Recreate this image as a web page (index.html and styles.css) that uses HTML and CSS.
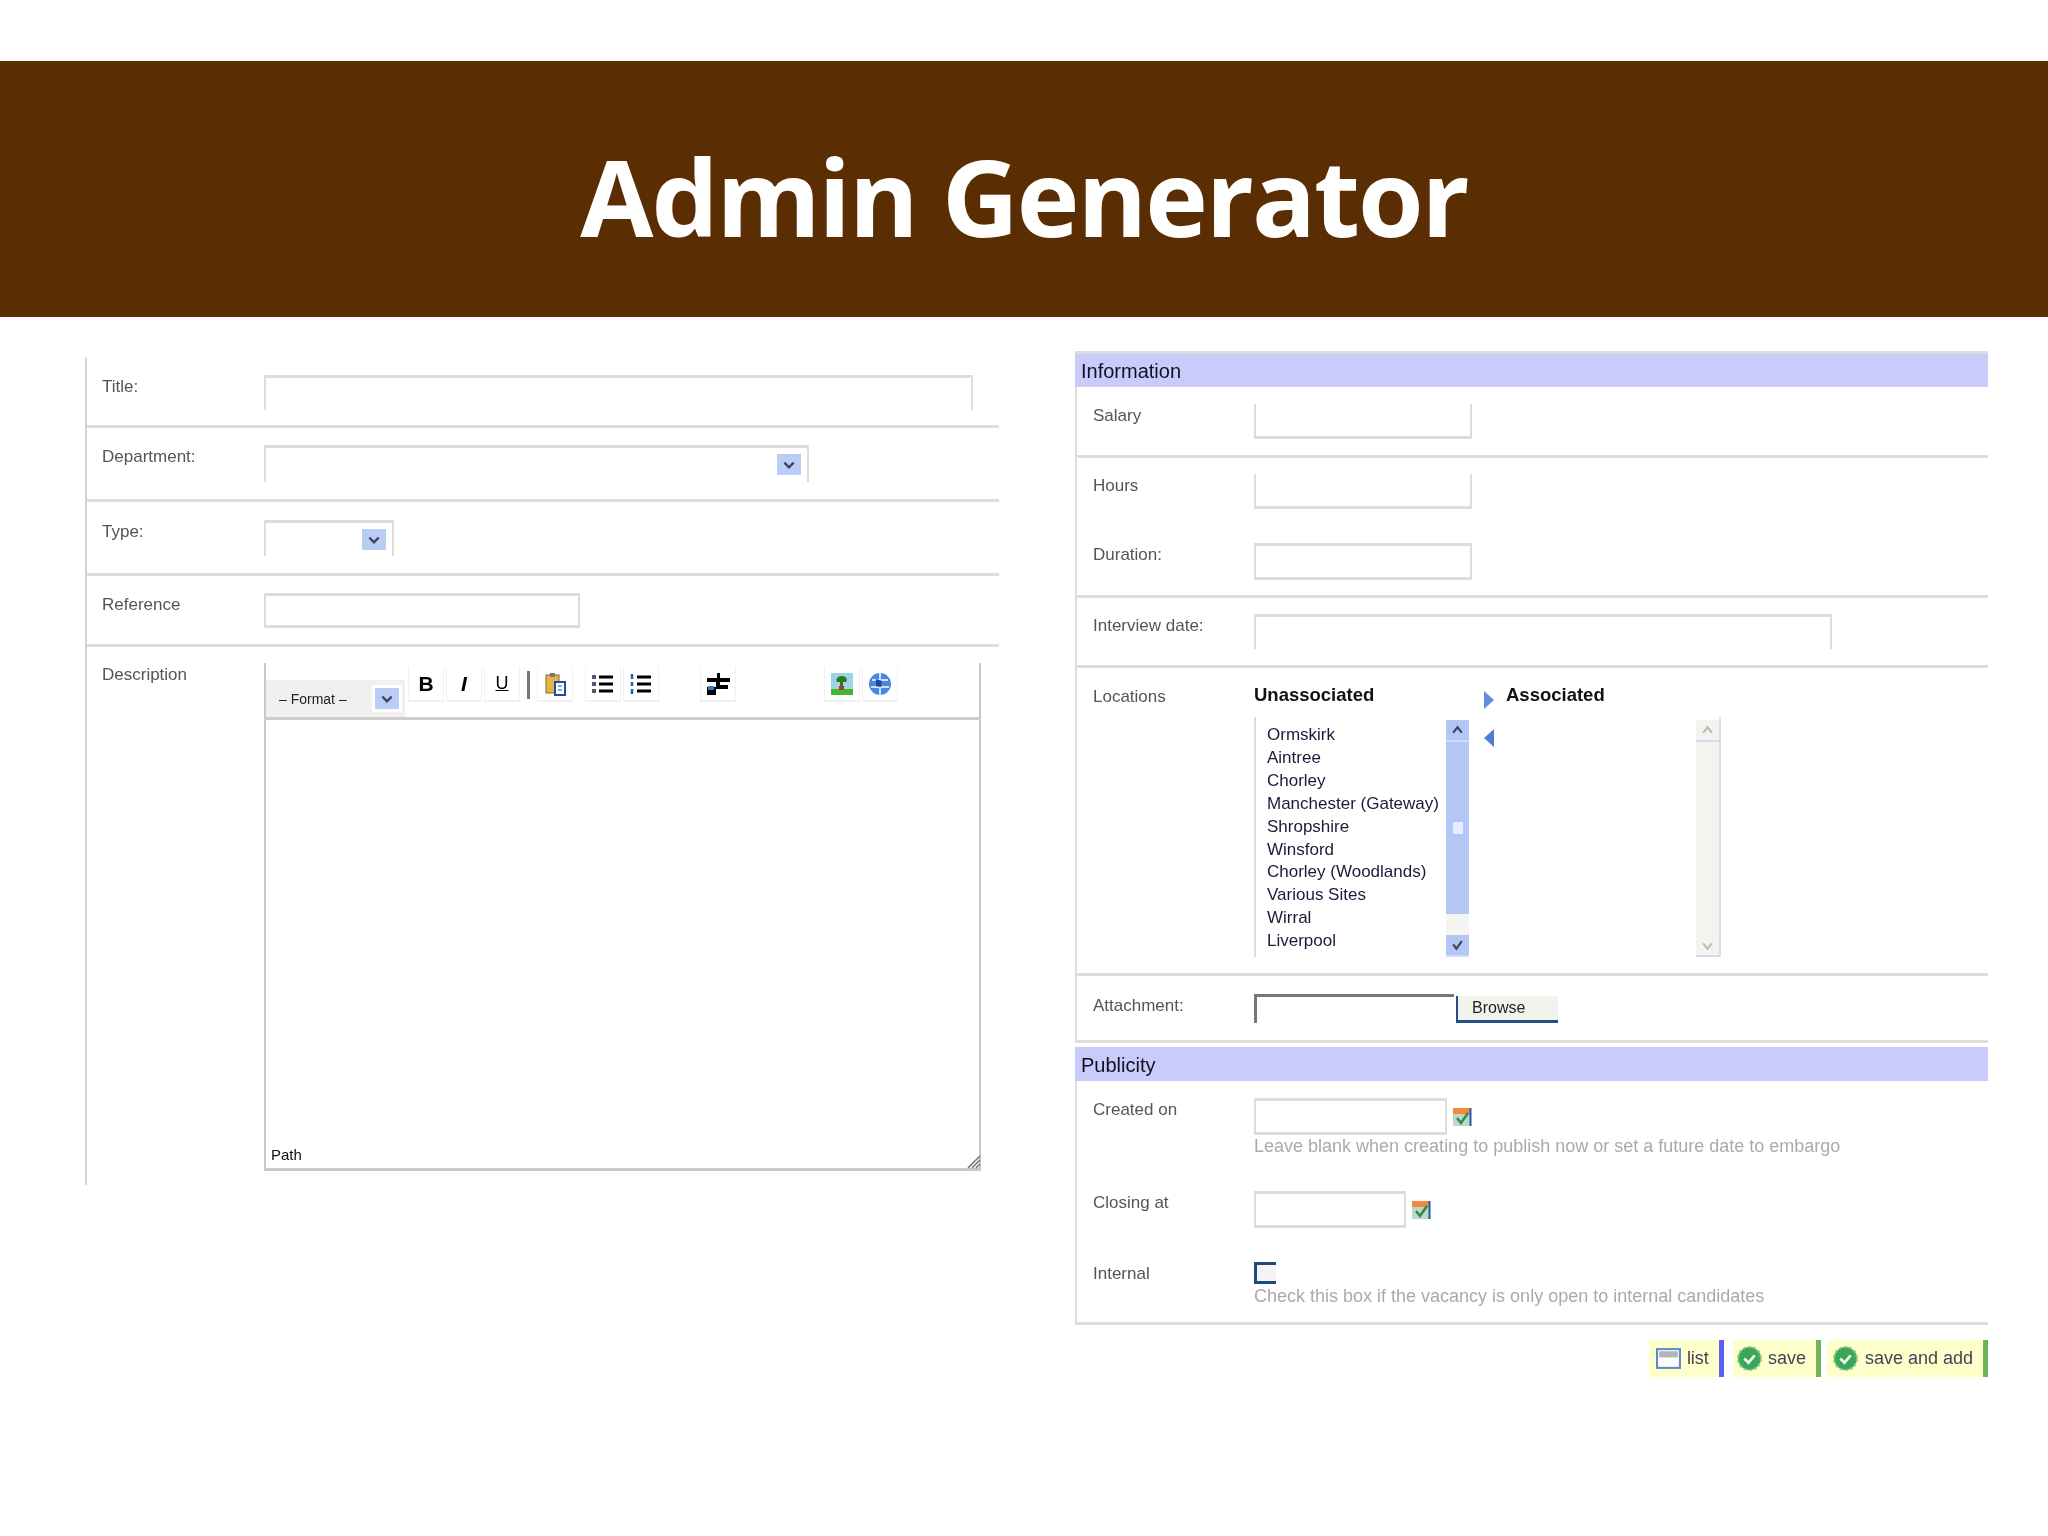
FILE: index.html
```html
<!DOCTYPE html>
<html lang="en">
<head>
    <meta charset="UTF-8">
    <title>Admin Generator</title>
    <link rel="stylesheet" href="styles.css">
</head>
<body>
    <header class="banner"><h1>Admin Generator</h1></header>
    <main class="slide">
        <section class="shot shot-left">
            <div class="row row-title">
                <label>Title:</label>
                <div class="field open-bottom title-field"></div>
            </div>
            <div class="row row-dept">
                <label>Department:</label>
                <div class="field open-bottom dept-field">
                    <span class="drop"><svg viewBox="0 0 12 12"><path d="M2 4l4 4 4-4" fill="none" stroke="#445" stroke-width="2"/></svg></span>
                </div>
            </div>
            <div class="row row-type">
                <label>Type:</label>
                <div class="field open-bottom type-field">
                    <span class="drop"><svg viewBox="0 0 12 12"><path d="M2 4l4 4 4-4" fill="none" stroke="#445" stroke-width="2"/></svg></span>
                </div>
            </div>
            <div class="row row-ref">
                <label>Reference</label>
                <div class="field ref-field"></div>
            </div>
            <div class="row row-desc">
                <label>Description</label>
                <div class="editor">
                    <div class="toolbar">
                        <div class="format">
                            <span>– Format –</span>
                            <span class="drop"><svg viewBox="0 0 12 12"><path d="M2 4l4 4 4-4" fill="none" stroke="#445" stroke-width="2"/></svg></span>
                        </div>
                        <span class="tool glyph first"><b>B</b></span>
                        <span class="tool glyph"><b><i>I</i></b></span>
                        <span class="tool glyph"><u>U</u></span>
                        <span class="sep"></span>
                        <span class="tool">
                            <svg viewBox="0 0 24 24"><rect x="3" y="3" width="13" height="18" fill="#e3b54a" stroke="#8a6a1e"/><rect x="7" y="1" width="5" height="4" fill="#777"/><rect x="12" y="10" width="10" height="13" fill="#fff" stroke="#1c4fa0" stroke-width="2"/><path d="M15 14h4M15 18h4" stroke="#1c4fa0"/></svg>
                        </span>
                        <span class="tool gap-list">
                            <svg viewBox="0 0 24 24"><path d="M8 5h14M8 12h14M8 19h14" stroke="#000" stroke-width="3"/><rect x="1" y="3" width="4" height="4" fill="#557"/><rect x="1" y="10" width="4" height="4" fill="#557"/><rect x="1" y="17" width="4" height="4" fill="#557"/></svg>
                        </span>
                        <span class="tool">
                            <svg viewBox="0 0 24 24"><path d="M8 5h14M8 12h14M8 19h14" stroke="#000" stroke-width="3"/><path d="M3 2v5M3 10v4M3 17v5" stroke="#2a5caa" stroke-width="2.5"/></svg>
                        </span>
                        <span class="tool gap-rule">
                            <svg viewBox="0 0 24 24"><path d="M11 1h3v5h10v4H14v3h8v4H10v6H1v-8h9v-5H1V6h10z" fill="#000"/><rect x="2" y="14" width="6" height="4" fill="#3f74c8"/></svg>
                        </span>
                        <span class="tool gap-media">
                            <svg viewBox="0 0 24 24"><rect x="1" y="1" width="22" height="22" fill="#9fd3e8"/><rect x="1" y="17" width="22" height="6" fill="#45b52c"/><path d="M12 4c4 0 6 3 4 6h-3v8h-3v-8H7C5 7 8 4 12 4z" fill="#2d7a22"/><rect x="9" y="14" width="5" height="4" fill="#a33"/></svg>
                        </span>
                        <span class="tool">
                            <svg viewBox="0 0 24 24"><circle cx="12" cy="12" r="11" fill="#4d86e0"/><path d="M4 8h16M3 15h18M12 1v22" stroke="#cfe0fa" stroke-width="2"/><path d="M8 7l6 2-1 6-5-1z" fill="#1b48a8"/></svg>
                        </span>
                    </div>
                    <div class="editor-body">
                        <span class="path">Path</span>
                        <svg class="grip" viewBox="0 0 16 16"><path d="M15 3L3 15M15 7l-8 8M15 11l-4 4" stroke="#777" stroke-width="1.6"/></svg>
                    </div>
                </div>
            </div>
        </section>

        <section class="shot shot-right">
            <h2 class="legend legend-first">Information</h2>
            <div class="group group-salary">
                <div class="line">
                    <label>Salary</label>
                    <div class="field open-top short-field"></div>
                </div>
            </div>
            <div class="group group-hours">
                <div class="line line-hours">
                    <label>Hours</label>
                    <div class="field open-top short-field"></div>
                </div>
                <div class="line line-duration">
                    <label>Duration:</label>
                    <div class="field short-field duration-field"></div>
                </div>
            </div>
            <div class="group group-interview">
                <div class="line">
                    <label>Interview date:</label>
                    <div class="field open-bottom interview-field"></div>
                </div>
            </div>
            <div class="group group-locations">
                <div class="line">
                    <label>Locations</label>
                    <div class="assoc">
                        <strong>Unassociated</strong>
                        <svg class="arrow" viewBox="0 0 12 18"><path d="M1 0l10 9-10 9z" fill="#5f8ede"/></svg>
                        <strong>Associated</strong>
                        <div class="list list-from">
                            <ul>
                                <li>Ormskirk</li>
                                <li>Aintree</li>
                                <li>Chorley</li>
                                <li>Manchester (Gateway)</li>
                                <li>Shropshire</li>
                                <li>Winsford</li>
                                <li>Chorley (Woodlands)</li>
                                <li>Various Sites</li>
                                <li>Wirral</li>
                                <li>Liverpool</li>
                            </ul>
                            <div class="scroll">
                                <span class="scroll-btn"><svg viewBox="0 0 12 12"><path d="M2 8l4-5 4 5" fill="none" stroke="#445" stroke-width="2"/></svg></span>
                                <span class="scroll-thumb"><i></i></span>
                                <span class="scroll-track"></span>
                                <span class="scroll-btn"><svg viewBox="0 0 12 12"><path d="M2 5l3 4 5-7" fill="none" stroke="#445" stroke-width="2"/></svg></span>
                            </div>
                        </div>
                        <svg class="arrow arrow-back" viewBox="0 0 12 18"><path d="M11 0L1 9l10 9z" fill="#4f7fd2"/></svg>
                        <div class="list list-to">
                            <ul></ul>
                            <div class="scroll scroll-off">
                                <span class="scroll-btn"><svg viewBox="0 0 12 12"><path d="M2 8l4-5 4 5" fill="none" stroke="#bbb" stroke-width="2"/></svg></span>
                                <span class="scroll-fill"></span>
                                <span class="scroll-btn"><svg viewBox="0 0 12 12"><path d="M2 4l4 5 4-5" fill="none" stroke="#bbb" stroke-width="2"/></svg></span>
                            </div>
                        </div>
                    </div>
                </div>
            </div>
            <div class="group group-attach">
                <div class="line">
                    <label>Attachment:</label>
                    <div class="file-input"></div>
                    <span class="browse">Browse</span>
                </div>
            </div>
            <h2 class="legend">Publicity</h2>
            <div class="group group-publicity">
                <div class="line line-created">
                    <label>Created on</label>
                    <div>
                        <div class="with-cal">
                            <div class="field created-field"></div>
                            <svg class="cal" viewBox="0 0 20 20"><rect x="1" y="1" width="17" height="6" fill="#f08b3c"/><rect x="1" y="7" width="17" height="12" fill="#bcd8c8"/><path d="M5 11l4 5 7-10" fill="none" stroke="#2e8a4a" stroke-width="2.5"/><path d="M18.500 1v18" stroke="#2a55a8" stroke-width="2"/></svg>
                        </div>
                        <p class="help">Leave blank when creating to publish now or set a future date to embargo</p>
                    </div>
                </div>
                <div class="line line-closing">
                    <label>Closing at</label>
                    <div class="with-cal">
                        <div class="field closing-field"></div>
                        <svg class="cal" viewBox="0 0 20 20"><rect x="1" y="1" width="17" height="6" fill="#f08b3c"/><rect x="1" y="7" width="17" height="12" fill="#bcd8c8"/><path d="M5 11l4 5 7-10" fill="none" stroke="#2e8a4a" stroke-width="2.5"/><path d="M18.500 1v18" stroke="#2a55a8" stroke-width="2"/></svg>
                    </div>
                </div>
                <div class="line line-internal">
                    <label>Internal</label>
                    <div>
                        <div class="check"></div>
                        <p class="help">Check this box if the vacancy is only open to internal candidates</p>
                    </div>
                </div>
            </div>
            <div class="actions">
                <a class="action action-list">
                    <svg viewBox="0 0 24 24"><rect x="1" y="3" width="22" height="18" fill="#fff" stroke="#5b8cc8" stroke-width="2"/><rect x="3" y="5" width="18" height="6" fill="#b5b5b5"/></svg>
                    list
                </a>
                <a class="action action-save">
                    <svg viewBox="0 0 24 24"><circle cx="12" cy="12" r="11" fill="#3ba55a" stroke="#8acb8a" stroke-dasharray="3 2" stroke-width="2"/><path d="M7 12l4 4 6-7" fill="none" stroke="#eaf7ea" stroke-width="2.600"/></svg>
                    save
                </a>
                <a class="action action-save action-add">
                    <svg viewBox="0 0 24 24"><circle cx="12" cy="12" r="11" fill="#3ba55a" stroke="#8acb8a" stroke-dasharray="3 2" stroke-width="2"/><path d="M7 12l4 4 6-7" fill="none" stroke="#eaf7ea" stroke-width="2.600"/></svg>
                    save and add
                </a>
            </div>
        </section>
    </main>
</body>
</html>
```

FILE: styles.css
```css
* {
    box-sizing: border-box;
}

body {
    margin: 0;
    background: #fff;
    font-family: "Liberation Sans", Arial, sans-serif;
    font-size: 17px;
    color: #555;
}

.banner {
    display: flex;
    justify-content: center;
    align-items: center;
    height: 256px;
    margin-top: 61px;
    background: #5a2d02;
}

.banner h1 {
    margin: 14px 0 0;
    font-family: "Open Sans", sans-serif;
    font-size: 106px;
    font-weight: 700;
    letter-spacing: -2px;
    color: #fff;
}

.slide {
    display: flex;
    align-items: flex-start;
    gap: 76px;
    padding: 34px 60px 0 85px;
}

/* the two form pictures are soft, low resolution captures */
.shot {
    filter: blur(0.7px);
}

.shot-left {
    width: 914px;
    margin-top: 6px;
    border-left: 2px solid #d4d4d4;
}

.shot-right {
    width: 913px;
}

label {
    margin-top: 2px;
}

.row {
    display: flex;
    align-items: flex-start;
    padding-left: 15px;
    border-bottom: 3px solid #ddd;
}

.row label {
    width: 162px;
    flex: none;
}

.row-title { height: 71px; padding-top: 18px; }
.row-dept { height: 74px; padding-top: 17px; }
.row-type { height: 74px; padding-top: 18px; }
.row-ref { height: 71px; padding-top: 17px; }
.row-desc { height: 538px; padding-top: 16px; border-bottom: 0; }

.field {
    position: relative;
    height: 35px;
    border: solid #ddd;
    border-width: 3px 2px;
    background: #fff;
}

.open-bottom { border-bottom: 0; }
.open-top { border-top: 0; }

.title-field { width: 709px; }
.dept-field { width: 545px; height: 37px; }
.type-field { width: 130px; height: 36px; }
.ref-field { width: 316px; }
.short-field { width: 218px; }
.duration-field { height: 37px; }
.interview-field { width: 578px; }
.created-field { width: 193px; height: 37px; }
.closing-field { width: 152px; height: 37px; }

.drop {
    display: flex;
    align-items: center;
    justify-content: center;
    width: 24px;
    height: 21px;
    background: #b9cdf6;
}

.drop svg {
    width: 14px;
    height: 14px;
}

.field .drop {
    position: absolute;
    top: 6px;
    right: 6px;
}

.editor {
    display: flex;
    flex-direction: column;
    width: 717px;
    height: 508px;
    border: solid #c8c8c8;
    border-width: 0 2px 3px;
}

.toolbar {
    display: flex;
    align-items: flex-start;
    height: 57px;
    border-bottom: 3px solid #ccc;
}

.format {
    display: flex;
    align-items: center;
    justify-content: space-between;
    align-self: flex-end;
    width: 139px;
    height: 37px;
    padding: 0 6px 0 13px;
    font-size: 14px;
    color: #222;
    background: #f0f0ee;
}

.format .drop {
    outline: 3px solid #fff;
}

.tool {
    display: flex;
    align-items: center;
    justify-content: center;
    width: 36px;
    height: 35px;
    margin: 4px 2px 0 0;
    border: solid #f1f1f1;
    border-width: 0 1px 2px;
}

.tool svg {
    width: 24px;
    height: 24px;
}

.glyph {
    font-size: 21px;
    font-weight: bold;
    color: #000;
}

.glyph u {
    font-size: 18px;
    font-weight: normal;
}

.first { margin-left: 3px; }

.sep {
    width: 3px;
    height: 28px;
    margin: 8px 7px 0 5px;
    background: #777;
}

.gap-list { margin-left: 10px; }
.gap-rule { margin-left: 39px; }
.gap-media { margin-left: 86px; }

.editor-body {
    position: relative;
    flex: 1;
}

.path {
    position: absolute;
    left: 5px;
    bottom: 5px;
    font-size: 15px;
    color: #111;
}

.grip {
    position: absolute;
    right: -2px;
    bottom: -1px;
    width: 16px;
    height: 16px;
}

.legend {
    height: 34px;
    margin: 0;
    padding: 7px 0 0 6px;
    font-size: 20px;
    line-height: 22px;
    font-weight: normal;
    color: #112;
    background: #c9ccfb;
}

.legend-first {
    height: 36px;
    padding-top: 6px;
    border-top: 3px solid #ddd;
}

.group {
    border-left: 2px solid #ddd;
    border-bottom: 3px solid #ddd;
}

.line {
    display: flex;
    align-items: flex-start;
    padding-left: 16px;
}

.line label {
    width: 161px;
    flex: none;
}

.group-salary { height: 71px; padding-top: 17px; }
.group-hours { height: 140px; padding-top: 16px; }
.line-duration { margin-top: 34px; }
.group-interview { height: 70px; padding-top: 16px; }
.group-locations { height: 308px; padding-top: 17px; }
.group-attach { height: 67px; margin-bottom: 4px; padding-top: 18px; }
.group-publicity { height: 244px; padding-top: 17px; }

.assoc {
    display: grid;
    grid-template-columns: 215px 37px 215px;
    grid-template-rows: 32px 240px;
}

.assoc strong {
    font-size: 18.5px;
    line-height: 20px;
    color: #111;
}

.arrow {
    width: 12px;
    height: 18px;
    margin: 6px 0 0 14px;
}

.arrow-back {
    margin-top: 12px;
}

.list {
    display: flex;
    justify-content: space-between;
    overflow: hidden;
}

.list-from {
    border-left: 2px solid #ddd;
}

.list-to {
    border-right: 2px solid #ddd;
}

.list ul {
    flex: 1;
    min-width: 0;
    margin: 7px 0 0;
    padding: 0 0 0 11px;
    list-style: none;
    white-space: nowrap;
    overflow: hidden;
    font-size: 17px;
    line-height: 22.9px;
    color: #1a1a3a;
}

.scroll {
    display: flex;
    flex: none;
    flex-direction: column;
    width: 23px;
    margin-top: 3px;
    background: #b4c6f5;
}

.scroll-off {
    background: #f3f3f0;
}

.scroll-btn {
    display: flex;
    flex: none;
    align-items: center;
    justify-content: center;
    height: 22px;
    border-bottom: 2px solid #cfdcf9;
}

.scroll-btn svg {
    width: 13px;
    height: 13px;
}

.scroll-thumb {
    display: flex;
    align-items: center;
    justify-content: center;
    flex: 1;
}

.scroll-thumb i {
    width: 10px;
    height: 12px;
    background: #e4ecfd;
}

.scroll-track {
    height: 21px;
    background: #f4f4f0;
}

.scroll-fill {
    flex: 1;
}

.file-input {
    width: 200px;
    height: 29px;
    border: solid #777;
    border-width: 3px 0 0 3px;
}

.browse {
    width: 102px;
    height: 27px;
    margin: 2px 0 0 2px;
    padding: 3px 0 0 14px;
    font-size: 16px;
    color: #222;
    background: #f3f3ee;
    border: solid #244f80;
    border-width: 0 0 3px 2px;
}

.with-cal {
    display: flex;
    align-items: flex-start;
    gap: 5px;
}

.cal {
    width: 20px;
    height: 20px;
    margin-top: 9px;
}

.help {
    margin: 1px 0 0;
    font-size: 18px;
    color: #aaa;
    white-space: nowrap;
}

.line-closing { margin-top: 34px; }
.line-internal { margin-top: 34px; }

.check {
    width: 22px;
    height: 22px;
    margin-bottom: 2px;
    border: solid #1d4a78;
    border-width: 3px 0 3px 3px;
    background: #f4f4f4;
}

.actions {
    display: flex;
    justify-content: flex-end;
    margin-top: 15px;
}

.action {
    display: flex;
    align-items: center;
    gap: 6px;
    height: 37px;
    margin-left: 9px;
    padding: 0 10px 0 4px;
    font-size: 18px;
    color: #445;
    background: #ffffcc;
    border-right: 5px solid #5b62f3;
}

.action svg {
    width: 25px;
    height: 25px;
}

.action-list {
    padding-left: 7px;
}

.action-save {
    border-right-color: #6fb35a;
}

.action-add {
    gap: 7px;
    margin-left: 6px;
    padding-left: 6px;
}
```
